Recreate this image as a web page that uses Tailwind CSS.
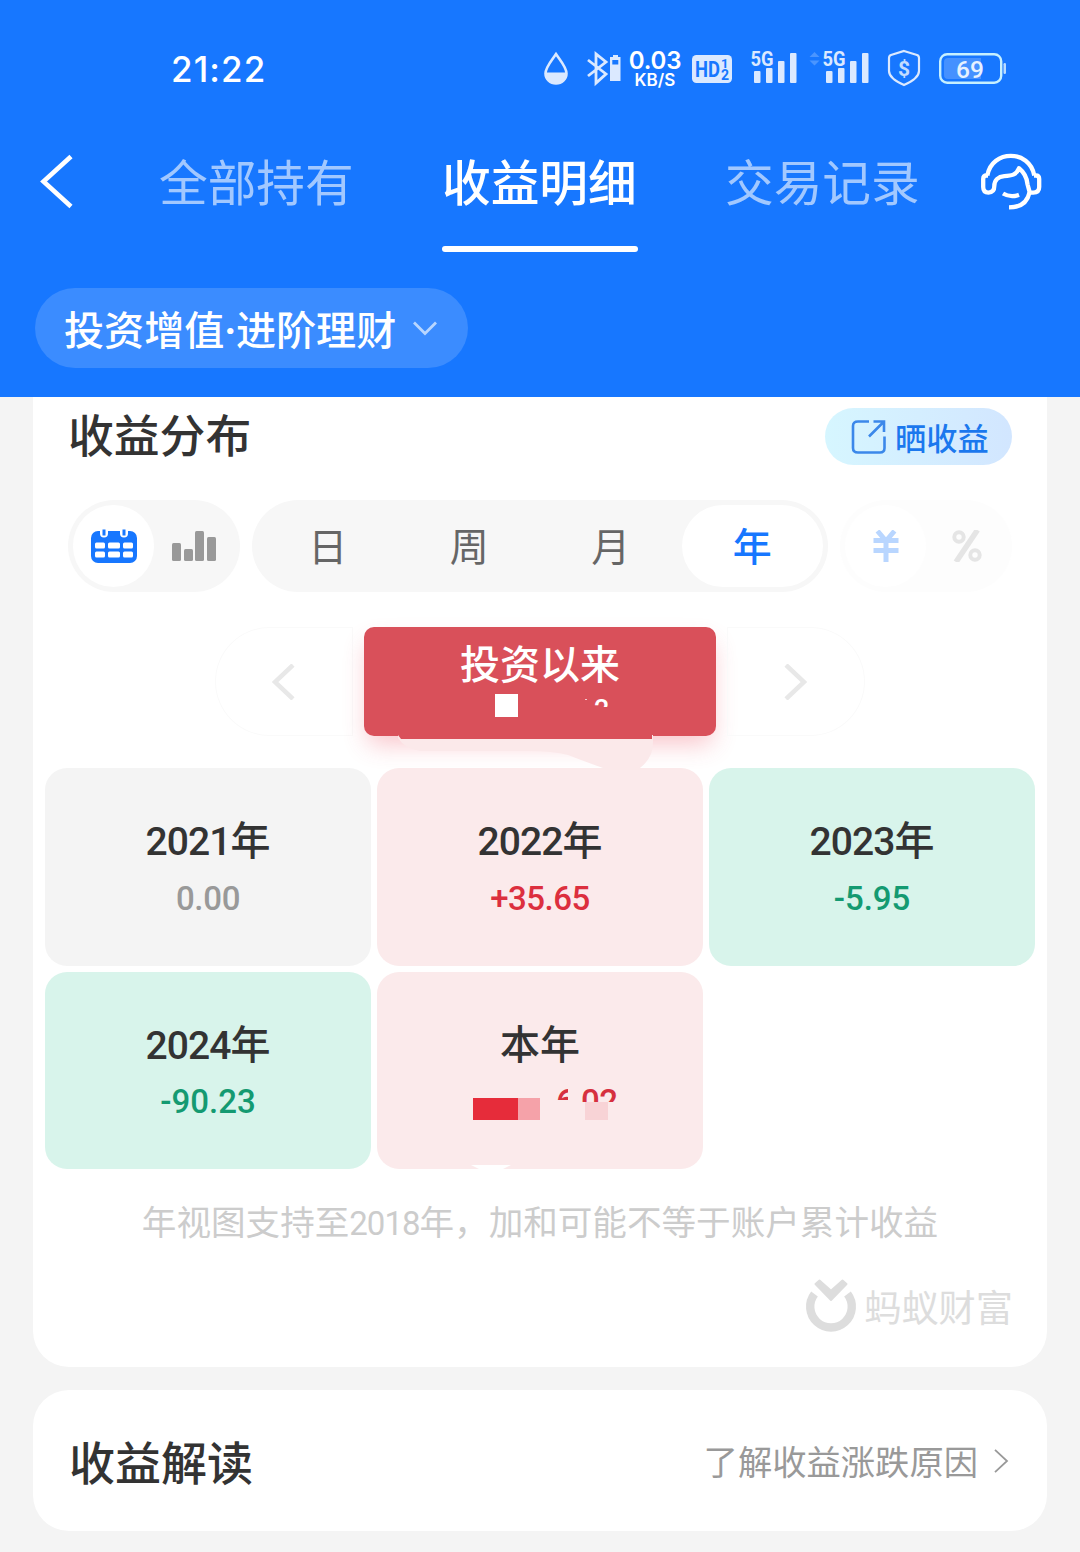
<!DOCTYPE html>
<html lang="zh-CN">
<head>
  <meta charset="UTF-8">
  <meta name="viewport" content="width=device-width, initial-scale=1.0">
  <title>收益明细</title>
  <script src="https://cdn.jsdelivr.net/npm/@tailwindcss/browser@4"></script>
</head>
<body class="bg-[#f4f4f4] font-['Noto_Sans_CJK_SC',sans-serif] text-[#333] w-[1080px] h-[1552px] overflow-hidden">

  <header class="bg-[#1777ff] text-white h-[397px]">
    <!-- Status bar -->
    <div class="flex pt-12 h-[137px] pl-[171px]">
      <span class="w-[373px] h-10 leading-[42px] text-[35px] font-medium font-['Inter',sans-serif] tracking-[1.1px]">21:22</span>
      <div class="flex h-10 text-[#dbe9ff]">
        <svg class="w-6 h-10" viewBox="0 0 24 40" fill="none">
          <path d="M12 6C8 12 1.500 19 1.500 25.500a10.500 10 0 0 0 21 0C22.500 19 16 12 12 6Z" stroke="currentColor" stroke-width="2.600"/>
          <path d="M1.500 24.500h21c0 15-21 15-21 0Z" fill="currentColor"/>
        </svg>
        <svg class="w-[36px] h-10 ml-[18px]" viewBox="0 0 36 40" fill="none">
          <path d="M2 12l18 14-10 9V6l10 8L2 28" stroke="currentColor" stroke-width="2.800"/>
          <path d="M27 7h5v2h2.500v24H24V9h3zM26.300 12v4.500h6V12z" fill="currentColor" fill-rule="evenodd"/>
        </svg>
        <div class="w-[54px] ml-[6px] text-center text-white font-semibold font-['Inter',sans-serif]">
          <div class="text-[24px] leading-[26px] tracking-[-0.2px]">0.03</div>
          <div class="text-[17px] leading-[13px] tracking-[0.1px]">KB/S</div>
        </div>
        <svg class="w-10 h-10 ml-[10px]" viewBox="0 0 40 40">
          <rect y="7" width="40" height="28" rx="4.500" fill="#dbe9ff"/>
          <text x="3" y="29" font-family="Roboto" font-weight="700" font-size="22" textLength="25" lengthAdjust="spacingAndGlyphs" fill="#1777ff">HD</text>
          <text x="29" y="19.500" font-family="Roboto" font-weight="700" font-size="13" fill="#1777ff">1</text>
          <text x="29" y="32" font-family="Roboto" font-weight="700" font-size="14" fill="#1777ff">2</text>
        </svg>
        <svg class="w-[47px] h-10 ml-[19px]" viewBox="0 0 47 40" fill="currentColor">
          <text x="-.5" y="18" font-family="Roboto" font-weight="700" font-size="20" textLength="23" lengthAdjust="spacingAndGlyphs">5G</text>
          <rect x="3" y="23" width="6.500" height="12" rx="1"/><rect x="15" y="20" width="6.500" height="15" rx="1"/><rect x="27" y="13" width="6.500" height="22" rx="1"/><rect x="39" y="5" width="6.500" height="30" rx="1"/>
        </svg>
        <svg class="w-[11px] h-10 ml-[11px]" viewBox="0 0 11 40" fill="#4a95ff"><path d="M0.500 9l5-5 5 5zM0.500 12.500l5 5 5-5z"/></svg>
        <svg class="w-[47px] h-10 ml-[3px]" viewBox="0 0 47 40" fill="currentColor">
          <text x="-.5" y="18" font-family="Roboto" font-weight="700" font-size="20" textLength="23" lengthAdjust="spacingAndGlyphs">5G</text>
          <rect x="3" y="23" width="6.500" height="12" rx="1"/><rect x="15" y="20" width="6.500" height="15" rx="1"/><rect x="27" y="13" width="6.500" height="22" rx="1"/><rect x="39" y="5" width="6.500" height="30" rx="1"/>
        </svg>
        <svg class="w-[34px] h-10 ml-[17px]" viewBox="0 0 34 40" fill="none">
          <path d="M17 3l13 4q2 .7 2 3v13c0 6-6 10-15 14C8 33 2 29 2 23V10q0-2.300 2-3Z" stroke="currentColor" stroke-width="2.200"/>
          <text x="17" y="27.500" text-anchor="middle" font-family="Roboto" font-weight="700" font-size="21" fill="#c3dcff">$</text>
        </svg>
        <svg class="w-[68px] h-10 ml-[18px]" viewBox="0 0 68 40" fill="none">
          <rect x="1.200" y="6.200" width="61" height="28.500" rx="7" stroke="#c6f0ff" stroke-width="2.400"/>
          <path d="M9 10h33v21H9q-4 0-4-4V14q0-4 4-4Z" fill="#4591ff"/>
          <rect x="64.500" y="15" width="2.500" height="11" rx="1.200" fill="#b9dcff"/>
          <text x="31" y="29.500" text-anchor="middle" font-family="Roboto" font-weight="500" font-size="24.500" fill="#e6f1ff">69</text>
        </svg>
      </div>
    </div>

    <!-- Tabs -->
    <nav class="flex h-[115px] pl-[38px] text-[48.700px] leading-[86px] whitespace-nowrap">
      <svg class="w-9 h-[90px]" viewBox="0 0 36 90" fill="none" stroke="#fff" stroke-width="4.600"><path d="M33 19.500L5.500 44.500l27.500 25"/></svg>
      <span class="ml-[85px] w-[283px] text-white/60">全部持有</span>
      <div class="w-[196px] flex flex-col justify-between">
        <span class="h-[90px] font-medium">收益明细</span>
        <span class="h-[6px] rounded-full bg-white"></span>
      </div>
      <span class="ml-[87px] w-[196px] text-white/60">交易记录</span>
      <svg class="w-[62px] h-[62px] ml-[59px] mt-[13px]" viewBox="0 0 62 62" fill="none" stroke="#fff" stroke-width="4.300" stroke-linejoin="round">
        <path d="M7.300 25.500C12 -.8 49.600 -.8 54.300 25.500"/>
        <path d="M8 25.500H6.500Q3.200 25.500 3.200 29v8q0 5.600 5.300 5.600 5.800 0 5.800-6.500c0-6 4-9.500 10-10 7-.3 12-1 14.700-7.800 5 4 8 10 8.500 16l2.300 8.300h3.400q6 0 6-5.600v-8q0-3.500-3.400-3.500H54"/>
        <path d="M49.500 42.500c-2 9.500-8.500 14.900-20.500 14.900"/>
        <path d="M23 43.500q7.500 4.500 16 1.300"/>
      </svg>
    </nav>

    <button class="flex items-center mt-9 ml-[35px] w-[433px] h-20 rounded-full bg-[#3b8cff] pl-[29px] text-[40.100px] leading-[76px] font-medium whitespace-nowrap">
      <span class="w-[349px] pt-[4px] text-left">投资增值<span class="font-['Roboto',sans-serif] font-bold tracking-[-0.500px]">·</span>进阶理财</span>
      <svg class="w-6 h-4" viewBox="0 0 24 16" fill="none" stroke="#b8d6ff" stroke-width="2.800"><path d="M1 2.500l11 11 11-11"/></svg>
    </button>
  </header>

  <main class="px-[33px]">
    <section class="bg-white rounded-b-[36px] h-[970px] pt-[11px] px-3">
      <div class="flex items-center justify-between pl-[23px] pr-[23px] h-[57px]">
        <h2 class="text-[45.800px] leading-[51px] mb-[6px] font-medium">收益分布</h2>
        <button class="flex items-center w-[187px] h-[57px] rounded-full pl-[26px] bg-linear-to-r from-[#d6f6ff] to-[#d2e6ff] text-[#1b78ee] text-[31.200px] leading-[57px] font-medium">
          <svg class="w-9 h-9 mr-2" viewBox="0 0 36 36" fill="none" stroke="#3b88ea" stroke-width="2.600"><path d="M18 2.500H7Q2 2.500 2 7v22q0 4.500 5 4.500h22q4.500 0 4.500-4.500V17.500M22.500 2.500H33V13M33 2.500L18 17.500"/></svg>
          晒收益
        </button>
      </div>

      <div class="flex gap-3 mt-[35px] ml-[23px] h-[92px]">
        <div class="flex w-[172px] p-[5px] rounded-full bg-[#f7f7f7]">
          <span class="w-[81px] h-[82px] rounded-full bg-white flex items-center justify-center">
            <svg class="w-[46px] h-[36px]" viewBox="0 0 46 36">
              <rect y="3" width="46" height="32" rx="7" fill="#1777ff"/>
              <path d="M13 0v5.500M33 0v5.500" stroke="#fff" stroke-width="8" stroke-linecap="round"/>
              <path d="M13 1.500v6M33 1.500v6" stroke="#1777ff" stroke-width="3"/>
              <g fill="#fff"><rect x="4" y="14.500" width="10" height="6" rx="1.500"/><rect x="17" y="14.500" width="12" height="6" rx="1.500"/><rect x="32" y="14.500" width="10" height="6" rx="1.500"/><rect x="4" y="23.500" width="10" height="6" rx="1.500"/><rect x="17" y="23.500" width="12" height="6" rx="1.500"/><rect x="32" y="23.500" width="10" height="6" rx="1.500"/></g>
            </svg>
          </span>
          <span class="w-[80px] h-[82px] flex items-center justify-center">
            <svg class="w-11 h-[30px]" viewBox="0 0 44 30" fill="#999"><rect y="12" width="9" height="18" rx="1.500"/><rect x="12" y="18" width="9" height="12" rx="1.500"/><rect x="23" width="9" height="30" rx="1.500"/><rect x="35" y="6" width="9" height="24" rx="1.500"/></svg>
          </span>
        </div>
        <div class="grid grid-cols-4 w-[576px] p-[5px] rounded-full bg-[#f7f7f7] text-[39px] leading-[79px] text-center text-[#666]">
          <span>日</span>
          <span>周</span>
          <span>月</span>
          <span class="rounded-full bg-white text-[#1777ff] font-medium">年</span>
        </div>
        <div class="flex w-[172px] p-[5px] rounded-full bg-[#fdfdfd]">
          <span class="w-[81px] h-[82px] rounded-full bg-white flex items-center justify-center">
            <svg class="w-[26px] h-8" viewBox="0 0 26 32" fill="none" stroke="#b9d6ff" stroke-width="5"><path d="M4.500 1L13 11l8.500-10M13 11v21M.5 10.500h25M.5 20.500h25"/></svg>
          </span>
          <span class="w-[81px] h-[82px] flex items-center justify-center">
            <svg class="w-[30px] h-8" viewBox="0 0 30 32" fill="none" stroke="#e5e5e5" stroke-width="4"><circle cx="7" cy="7" r="4.700"/><circle cx="23" cy="25" r="4.700"/><path d="M25.500 0L4 32" stroke-width="5.500"/></svg>
          </span>
        </div>
      </div>

      <div class="relative flex justify-center gap-[11px] mt-[35px] h-[109px]">
        <span class="flex items-center w-[138px] rounded-l-full rounded-r-[10px] border border-[#fafafa] pl-[56px]">
          <svg class="w-[23px] h-9" viewBox="0 0 23 36" fill="none" stroke="#e8e8e8" stroke-width="4.500"><path d="M21 1L3 18l18 17"/></svg>
        </span>
        <div class="w-[352px] rounded-[10px] bg-[#d9505a] text-center shadow-[0_12px_24px_-4px_rgba(235,60,80,0.3)]">
          <div class="text-[40px] leading-[70px] font-medium text-white">投资以来</div>
        </div>
        <span class="flex items-center w-[138px] rounded-r-full rounded-l-[10px] border border-[#fafafa] pl-[56px]">
          <svg class="w-[23px] h-9" viewBox="0 0 23 36" fill="none" stroke="#e8e8e8" stroke-width="4.500"><path d="M2 1l18 17L2 35"/></svg>
        </span>
        <!-- Masked amount and the smear under the button -->
        <span class="absolute left-[450px] top-[67px] size-[23px] bg-white"></span>
        <span class="absolute left-[540px] top-[72px] w-[2px] h-px bg-white/70"></span>
        <span class="absolute left-[549px] top-[71px] w-[15px] h-[9px] overflow-hidden text-white text-[27px] leading-[24px] font-medium font-['Roboto',sans-serif]">2</span>
        <svg class="absolute left-[353px] top-[108px] w-[256px] h-[34px]" viewBox="0 0 256 34">
          <path d="M0 0h255v8q0 15-13 25H205Q188 27 170 20 155 16 130 16H22Q7 14 0 3Z" fill="#fbe9ea"/>
          <path d="M0 0h254v4H3Z" fill="#d9505a"/>
        </svg>
      </div>

      <div class="grid grid-cols-3 gap-[6px] mt-8 text-center">
        <div class="h-[198px] rounded-[22px] bg-[#f4f4f4] pt-[42px]">
          <div class="text-[40px] leading-[56px] font-medium"><span class="font-['Roboto',sans-serif] text-[39px] tracking-[-0.900px]">2021</span>年</div>
          <div class="mt-[4px] text-[33px] leading-[50px] font-medium font-['Roboto',sans-serif] tracking-[-0.300px] text-[#999]">0.00</div>
        </div>
        <div class="h-[198px] rounded-[22px] bg-[#fbeaeb] pt-[42px]">
          <div class="text-[40px] leading-[56px] font-medium"><span class="font-['Roboto',sans-serif] text-[39px] tracking-[-0.900px]">2022</span>年</div>
          <div class="mt-[4px] text-[33px] leading-[50px] font-medium font-['Roboto',sans-serif] tracking-[-0.500px] text-[#dc2f3e]">+35.65</div>
        </div>
        <div class="h-[198px] rounded-[22px] bg-[#d8f4eb] pt-[42px]">
          <div class="text-[40px] leading-[56px] font-medium"><span class="font-['Roboto',sans-serif] text-[39px] tracking-[-0.900px]">2023</span>年</div>
          <div class="mt-[4px] text-[33px] leading-[50px] font-medium font-['Roboto',sans-serif] text-[#149a71]">-5.95</div>
        </div>
        <div class="h-[197px] rounded-[22px] bg-[#d8f4eb] pt-[42px]">
          <div class="text-[40px] leading-[56px] font-medium"><span class="font-['Roboto',sans-serif] text-[39px] tracking-[-0.900px]">2024</span>年</div>
          <div class="mt-[3px] text-[33px] leading-[50px] font-medium font-['Roboto',sans-serif] text-[#149a71]">-90.23</div>
        </div>
        <div class="relative h-[197px] rounded-[22px] bg-[#fbeaeb] pt-[42px]">
          <div class="text-[40px] leading-[56px] font-medium">本年</div>
          <!-- Masked amount -->
          <span class="absolute left-[179px] top-[116px] w-[12px] h-[12px] overflow-hidden text-left text-[33px] leading-[28px] font-medium font-['Roboto',sans-serif] text-[#d6303f]">6</span>
          <span class="absolute left-[204px] top-[116px] w-[37px] h-[14px] overflow-hidden text-left text-[33px] leading-[28px] font-medium font-['Roboto',sans-serif] tracking-[-0.500px] text-[#d6303f]">02</span>
          <span class="absolute left-[96px] top-[126px] w-[45px] h-[22px] bg-[#e62c3a]"></span>
          <span class="absolute left-[141px] top-[126px] w-[22px] h-[22px] bg-[#f5a2a9]"></span>
          <span class="absolute left-[208px] top-[130px] w-[23px] h-[18px] bg-[#f8d3d6]"></span>
          <svg class="absolute left-[94px] top-[193px] w-10 h-1" viewBox="0 0 40 4" fill="#fff"><path d="M0 0h40l-8 4H8z"/></svg>
        </div>
      </div>

      <p class="mt-[24px] h-[54px] text-center text-[34.600px] leading-[54px] text-[#ccc] whitespace-nowrap">年视图支持至<span class="font-['Roboto',sans-serif] text-[33px] tracking-[-1px]">2018</span>年，加和可能不等于账户累计收益</p>

      <div class="flex justify-end mt-[32px] h-[54px] pr-[22px] text-[#ddd]">
        <svg class="w-[52px] h-[54px] mr-[7px]" viewBox="0 0 52 54" fill="none">
          <path d="M9.500 15A20.800 20.800 0 1 0 42.500 15" stroke="currentColor" stroke-width="8.400"/>
          <path d="M10.500 5l4-3.500L26 11.700 37.500 1.500l4 3.500L26 21z" fill="currentColor" stroke="currentColor" stroke-width="2" stroke-linejoin="round"/>
        </svg>
        <span class="text-[37.200px] leading-[54px]">蚂蚁财富</span>
      </div>
    </section>

    <section class="flex items-center justify-between mt-[23px] h-[141px] rounded-[36px] bg-white pl-9 pr-[38px]">
      <h2 class="text-[46px] leading-[141px] font-medium">收益解读</h2>
      <a class="flex items-center text-[34.300px] leading-[141px] text-[#999]">
        了解收益涨跌原因
        <svg class="w-4 h-6 ml-[15px]" viewBox="0 0 16 24" fill="none" stroke="#999" stroke-width="1.800"><path d="M2 .8L14 12 2 23.200"/></svg>
      </a>
    </section>
  </main>
</body>
</html>
